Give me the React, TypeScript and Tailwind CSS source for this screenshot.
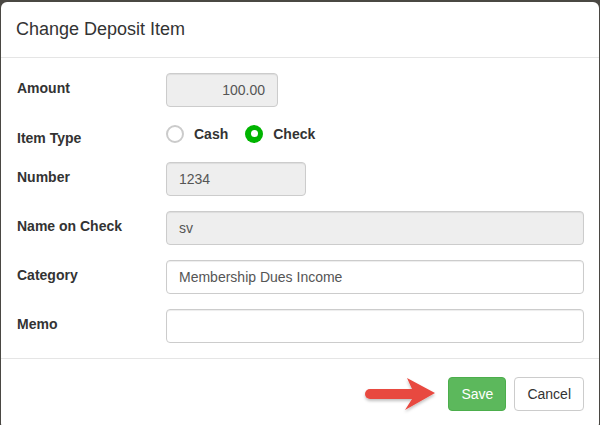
const font = { fontFamily: '"Liberation Sans", Arial, Helvetica, sans-serif' };

function FormRow({
  label,
  labelPad = "pt-[5px]",
  children,
}: {
  label: string;
  labelPad?: string;
  children: React.ReactNode;
}) {
  return (
    <div className="flex">
      <label
        className={`w-[150px] shrink-0 pl-[1px] ${labelPad} text-[14px] leading-[20px] font-bold text-[#333]`}
      >
        {label}
      </label>
      <div className="flex-1">{children}</div>
    </div>
  );
}

function TextBox({
  value,
  disabled,
  width,
  right,
}: {
  value: string;
  disabled?: boolean;
  width?: string;
  right?: boolean;
}) {
  return (
    <div
      className={`h-[34px] ${width ?? "w-full"} rounded-[4px] border border-[#ccc] px-[12px] flex items-center text-[14px] text-[#555] shadow-[inset_0_1px_1px_rgba(0,0,0,0.075)] ${
        disabled ? "bg-[#eee]" : "bg-white"
      } ${right ? "justify-end" : ""}`}
    >
      {value}
    </div>
  );
}

function Radio({ label, checked }: { label: string; checked?: boolean }) {
  return (
    <div className="flex items-center gap-[10px]">
      {checked ? (
        <span className="w-[18px] h-[18px] rounded-full bg-[#00b400] flex items-center justify-center">
          <span className="w-[7px] h-[7px] rounded-full bg-white" />
        </span>
      ) : (
        <span className="w-[18px] h-[18px] rounded-full border-2 border-[#cbcbcb] bg-white" />
      )}
      <span className="text-[14px] leading-[20px] font-bold text-[#333]">{label}</span>
    </div>
  );
}

function Arrow() {
  return (
    <svg width="76" height="38" viewBox="0 0 76 38" className="mr-[10px] mt-[2px]">
      <defs>
        <filter id="sh" x="-20%" y="-30%" width="140%" height="170%">
          <feDropShadow dx="0" dy="2" stdDeviation="1.5" floodColor="#000" floodOpacity="0.25" />
        </filter>
      </defs>
      <g filter="url(#sh)" fill="#e8483f">
        <line x1="8" y1="18" x2="52" y2="18" stroke="#e8483f" strokeWidth="10" strokeLinecap="round" />
        <polygon points="45,2 73,17 43,34 50,23 50,13" />
      </g>
    </svg>
  );
}

export default function App() {
  return (
    <div className="w-[600px] h-[425px] bg-[#4a4843] pt-[2px] pl-[1px]" style={font}>
      <div className="w-[598px] bg-white rounded-[6px] overflow-hidden">
        <div className="px-[15px] py-[15px] border-b border-[#e5e5e5]">
          <h4 className="text-[18px] leading-[25px] text-[#333]">Change Deposit Item</h4>
        </div>

        <div className="p-[15px] flex flex-col gap-[15px]">
          <FormRow label="Amount">
            <TextBox value="100.00" disabled width="w-[112px]" right />
          </FormRow>
          <div className="flex h-[25px]">
            <label className="w-[150px] shrink-0 pl-[1px] pt-[6px] text-[14px] leading-[20px] font-bold text-[#333]">
              Item Type
            </label>
            <div className="flex-1 h-[25px] flex items-center gap-[17px] pb-[2px]">
              <Radio label="Cash" />
              <Radio label="Check" checked />
            </div>
          </div>
          <FormRow label="Number">
            <TextBox value="1234" disabled width="w-[140px]" />
          </FormRow>
          <FormRow label="Name on Check">
            <TextBox value="sv" disabled />
          </FormRow>
          <FormRow label="Category">
            <TextBox value="Membership Dues Income" />
          </FormRow>
          <FormRow label="Memo">
            <TextBox value="" />
          </FormRow>
        </div>

        <div className="px-[15px] py-[15px] border-t border-[#e5e5e5] flex items-center justify-end">
          <Arrow />
          <button className="h-[34px] px-[12px] rounded-[4px] border border-[#4cae4c] bg-[#5cb85c] text-white text-[14px] leading-[20px]">
            Save
          </button>
          <button className="ml-[8px] h-[34px] px-[12px] rounded-[4px] border border-[#ccc] bg-white text-[#333] text-[14px] leading-[20px]">
            Cancel
          </button>
        </div>
      </div>
    </div>
  );
}
